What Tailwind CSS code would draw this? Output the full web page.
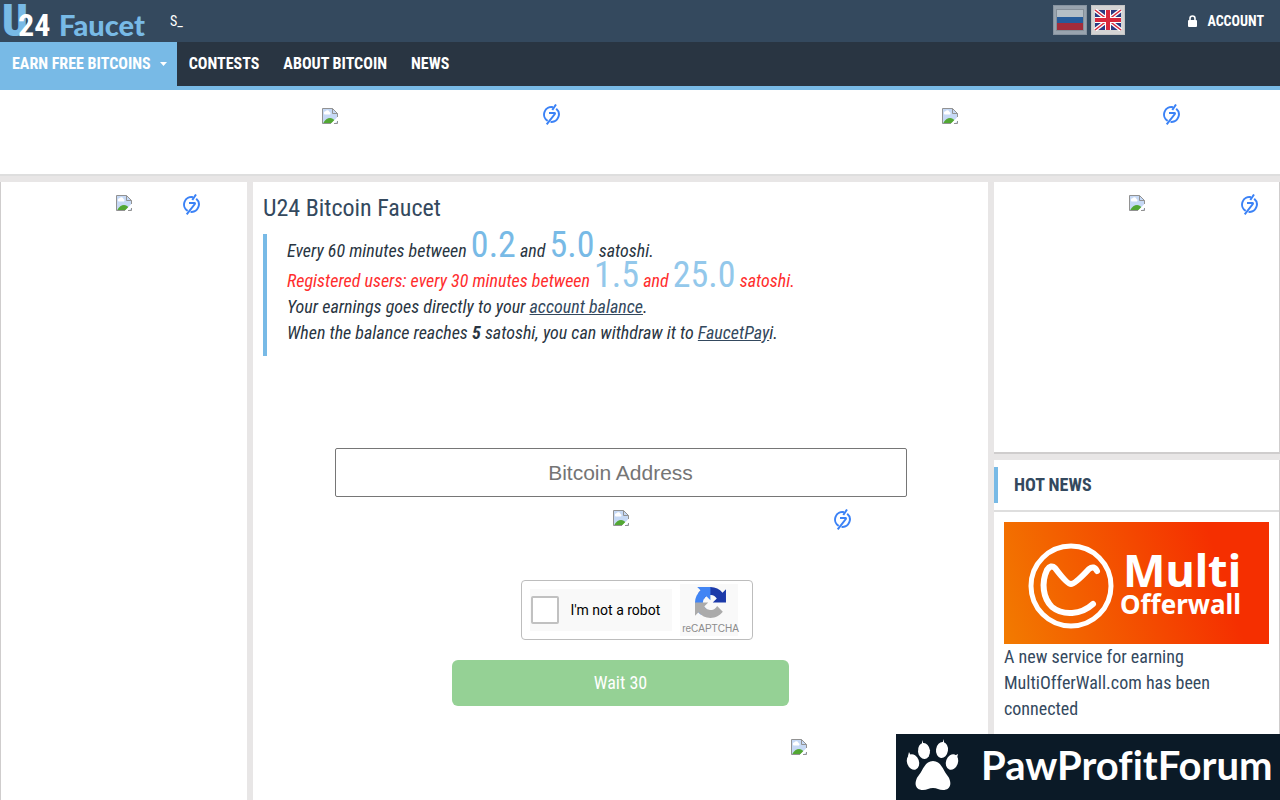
<!DOCTYPE html>
<html lang="en">

<head>
    <meta charset="UTF-8">
    <meta name="viewport" content="width=device-width, initial-scale=1.0">
    <title>U24 Bitcoin Faucet</title>
    <script src="https://cdn.jsdelivr.net/npm/@tailwindcss/browser@4"></script>
</head>

<body class="bg-[#e8e6e6] font-['Roboto_Condensed','Liberation_Sans_Narrow',Roboto,sans-serif] text-[#293542] overflow-x-hidden">

    <!-- shared icons -->
    <svg class="hidden">
        <symbol id="broken" viewBox="0 0 16 16">
            <path d="M.5 .5h10l5 5v10H.5z" fill="#c6d9f5" />
            <path d="M2.5 6.5a1.8 1.8 0 0 1 1-3.200 2.200 2.200 0 0 1 4 .6 1.500 1.500 0 0 1 .5 2.600z" fill="#fff" />
            <path d="M1 15.500c2-4 4.500-5.500 7-5.500 2 0 3.500 1 4.500 2.500l-3 3z" fill="#52a733" />
            <path d="M16 8.500L8.500 16H12l4-3.500z" fill="#fff" />
            <path d="M9 15.500H.5V.5h10M10.500 .5v5h5M10.500 .5l5 5V9M12 15.500h3.500V13" fill="none" stroke="#929292" />
        </symbol>
        <symbol id="adlogo" viewBox="0 0 17 21">
            <g fill="none" stroke="#3b82f6" stroke-width="2">
                <path d="M10 3.200A7.400 7.400 0 0 0 4.700 16.800M13.200 4.800a7.400 7.400 0 0 1-5.700 13" />
                <path d="M13 .5L9.300 6M6 9h5.500q.8 0 .3 1L3.700 20.300" />
            </g>
        </symbol>
    </svg>

    <header class="h-[42px] bg-[#34495e] flex items-center text-white">
        <a href="#" class="block" aria-label="U24 Faucet">
            <svg class="overflow-visible" width="150" height="42" viewBox="0 0 150 42">
                <g font-family="Roboto Condensed, Liberation Sans Narrow, sans-serif">
                    <text x="2" y="36" font-size="45" font-weight="900" fill="#78bae6">U</text>
                    <text x="18" y="36" font-size="32" font-weight="700" fill="#fff">24</text>
                </g>
                <text x="59" y="36" font-size="29" font-weight="900" fill="#78bae6" font-family="Lato, sans-serif">Faucet</text>
            </svg>
        </a>
        <span class="ml-5 text-sm leading-5">S_</span>
        <div class="ml-auto self-start pt-[5px] flex gap-1">
            <button class="w-[34px] h-[30px] bg-[#99a4af] border border-[#8793a0] grid place-items-center" aria-label="Русский">
                <svg width="28" height="22" viewBox="0 0 28 22">
                    <path d="M0 0h28v22H0z" fill="#858f99" />
                    <path d="M1 1h26v7H1z" fill="#b4bec6" />
                    <path d="M1 8h26v6H1z" fill="#265b9a" />
                    <path d="M1 14h26v7H1z" fill="#a22c3b" />
                </svg>
            </button>
            <button class="w-[34px] h-[30px] bg-[#d4d4d4] border border-[#c4c4c4] grid place-items-center" aria-label="English">
                <svg width="28" height="22" viewBox="0 0 28 22">
                    <path d="M0 0h28v22H0z" fill="#d4d4d4" />
                    <path d="M1 1h26v20H1z" fill="#2a3a83" />
                    <path d="M1 1l26 20M27 1L1 21" stroke="#fff" stroke-width="4" />
                    <path d="M1 1l26 20M27 1L1 21" stroke="#d8283c" stroke-width="1.500" />
                    <path d="M14 1v20M1 11h26" stroke="#fff" stroke-width="6" />
                    <path d="M14 1v20M1 11h26" stroke="#d8283c" stroke-width="4" />
                </svg>
            </button>
        </div>
        <a href="#" class="ml-[63px] mr-4 flex items-center gap-[10px] text-sm font-bold">
            <svg width="9" height="12" viewBox="0 0 9 12">
                <rect y="5" width="9" height="7" rx="1" fill="#fff" />
                <path d="M2 6V3.500a2.500 2.500 0 0 1 5 0V6" fill="none" stroke="#fff" stroke-width="1.600" />
            </svg>
            ACCOUNT
        </a>
    </header>

    <nav class="h-12 bg-[#293542] border-b-4 border-[#78bae6] flex text-white font-bold text-base">
        <a href="#" class="bg-[#78bae6] pl-3 pr-[10px] -mb-1 pb-1 flex items-center gap-[9px]">EARN FREE BITCOINS
            <svg width="7" height="4" viewBox="0 0 7 4"><path d="M0 0h7L3.500 4z" fill="#fff" /></svg>
        </a>
        <a href="#" class="px-3 flex items-center">CONTESTS</a>
        <a href="#" class="px-3 flex items-center">ABOUT BITCOIN</a>
        <a href="#" class="px-3 flex items-center">NEWS</a>
    </nav>

    <div class="h-[86px] bg-white border-b-2 border-[#dedede] px-5 pt-[14px] grid grid-cols-2">
        <div class="relative w-[468px] mx-auto flex justify-center pt-1">
            <svg class="size-4"><use href="#broken" /></svg>
            <svg class="absolute right-1 top-0 w-[17px] h-[21px]"><use href="#adlogo" /></svg>
        </div>
        <div class="relative w-[468px] mx-auto flex justify-center pt-1">
            <svg class="size-4"><use href="#broken" /></svg>
            <svg class="absolute right-1 top-0 w-[17px] h-[21px]"><use href="#adlogo" /></svg>
        </div>
    </div>

    <div class="flex gap-[6px] mt-[6px] min-h-[618px]">
        <aside class="w-[247px] shrink-0 bg-white border-l border-[#cfcdcd] pt-3">
            <div class="relative w-40 mx-auto flex justify-center pt-px">
                <svg class="size-4"><use href="#broken" /></svg>
                <svg class="absolute right-1 top-0 w-[17px] h-[21px]"><use href="#adlogo" /></svg>
            </div>
        </aside>

        <main class="flex-1 min-w-0 bg-white px-[10px] pt-[10px]">
            <h1 class="text-2xl leading-8 text-[#34495e]">U24 Bitcoin Faucet</h1>
            <blockquote class="mt-[10px] h-[122px] border-l-4 border-[#78bae6] pl-5 text-lg leading-[26px] italic">
                <p>Every 60 minutes between <span class="text-4xl leading-[22px] not-italic text-[#78bae6]">0.2</span> and <span class="text-4xl leading-[22px] not-italic text-[#78bae6]">5.0</span> satoshi.</p>
                <p class="text-[#ff2d2d]">Registered users: every 30 minutes between <span class="text-4xl leading-[22px] not-italic text-[#93c8eb]">1.5</span> and <span class="text-4xl leading-[22px] not-italic text-[#93c8eb]">25.0</span> satoshi.</p>
                <p>Your earnings goes directly to your <a href="#" class="underline text-[#34495e]">account balance</a>.</p>
                <p>When the balance reaches <b>5</b> satoshi, you can withdraw it to <a href="#" class="underline text-[#34495e]">FaucetPay</a>i.</p>
            </blockquote>

            <form class="mt-[92px] flex flex-col items-center">
                <input type="text" aria-label="Bitcoin Address" placeholder="Bitcoin Address"
                    class="w-4/5 h-[49px] border border-[#767676] rounded-xs text-center text-[21px] font-['Liberation_Sans',sans-serif] placeholder:text-[#757575]">

                <div class="relative w-[468px] h-[60px] mt-3 flex justify-center pt-px">
                    <svg class="size-4"><use href="#broken" /></svg>
                    <svg class="absolute right-1 top-0 w-[17px] h-[21px]"><use href="#adlogo" /></svg>
                </div>

                <div class="mt-[11px] ml-8 w-[232px] h-[60px] border border-[#bdbdbd] rounded-[4px] flex items-center pl-2 pr-[14px] justify-between font-[Roboto,sans-serif] text-black">
                    <label class="w-[142px] h-[42px] bg-[#f9f9f9] flex items-center pl-px gap-3 text-sm whitespace-nowrap">
                        <input type="checkbox" class="appearance-none size-7 shrink-0 bg-white border-2 border-[#c1c1c1] rounded-xs">
                        I'm not a robot
                    </label>
                    <div class="w-[58px] h-[52px] bg-[#f9f9f9] flex flex-col items-center pt-[3px] pl-1">
                        <svg class="shrink-0" width="31" height="31" viewBox="0 0 64 64">
                            <path d="M64 31.955l-.033-1.370V4.687l-7.160 7.160C50.948 4.674 42.033.093 32.050.093c-10.400 0-19.622 4.960-25.458 12.640l11.736 11.860a15.550 15.550 0 0 1 4.754-5.334c2.050-1.600 4.952-2.906 8.968-2.906.485 0 .860.057 1.135.163 4.976.393 9.288 3.140 11.828 7.124l-8.307 8.307L64 31.953" fill="#1c3aa9" />
                            <path d="M31.862.094l-1.370.033H4.594l7.160 7.160C4.580 13.147 0 22.060 0 32.046c0 10.400 4.960 19.622 12.640 25.458L24.500 45.768a15.550 15.550 0 0 1-5.334-4.754c-1.600-2.050-2.906-4.952-2.906-8.968 0-.485.057-.860.163-1.135.393-4.976 3.140-9.288 7.124-11.828l8.307 8.307L31.860.095" fill="#4285f4" />
                            <path d="M.001 32.045l.033 1.370v25.898l7.160-7.160c5.860 7.173 14.774 11.754 24.760 11.754 10.400 0 19.622-4.960 25.458-12.640l-11.736-11.860a15.550 15.550 0 0 1-4.754 5.334c-2.050 1.600-4.952 2.906-8.968 2.906-.485 0-.860-.057-1.135-.163-4.976-.393-9.288-3.140-11.828-7.124l8.307-8.307c-10.522.040-22.400.066-27.295-.005" fill="#ababab" />
                        </svg>
                        <span class="text-[10px] leading-[22px] text-[#8c8c8c] font-['Liberation_Sans',sans-serif]">reCAPTCHA</span>
                    </div>
                </div>

                <button type="button" class="mt-5 w-[337px] h-[46px] rounded-md bg-[#95d195] text-white text-lg">Wait 30</button>
            </form>

            <div class="mt-[33px] flex justify-center pl-[357px]">
                <svg class="size-4"><use href="#broken" /></svg>
            </div>
        </main>

        <aside class="w-[286px] shrink-0 flex flex-col gap-[6px]">
            <div class="h-[272px] bg-white border-r border-b-2 border-[#cfcdcd] pt-3">
                <div class="relative w-[250px] mx-auto flex justify-center pt-px">
                    <svg class="size-4"><use href="#broken" /></svg>
                    <svg class="absolute right-1 top-0 w-[17px] h-[21px]"><use href="#adlogo" /></svg>
                </div>
            </div>
            <section class="flex-1 bg-white border-r border-[#cfcdcd]">
                <div class="h-[52px] border-b-2 border-[#dedede] pt-[7px]">
                    <h2 class="h-9 border-l-4 border-[#78bae6] pl-4 text-lg leading-9 font-bold text-[#34495e]">HOT NEWS</h2>
                </div>
                <div class="p-[10px] text-lg leading-[26px] text-[#34495e]">
                    <svg class="block w-full h-[122px]" viewBox="0 0 265 122">
                        <defs>
                            <linearGradient id="banner" gradientUnits="userSpaceOnUse" x1="0" y1="110" x2="215" y2="40">
                                <stop offset="0" stop-color="#f27a00" />
                                <stop offset="1" stop-color="#f52f00" />
                            </linearGradient>
                        </defs>
                        <rect width="265" height="122" fill="url(#banner)" />
                        <g fill="none" stroke="#fff" stroke-linecap="round" stroke-linejoin="round">
                            <circle cx="67" cy="64" r="40" stroke-width="5" />
                            <path d="M93 49q-3-6-8-2-14 15-18 15T51 46q-4-4-8 2c-6 13-4 28 5 37 11 9 29 8 41-3" stroke-width="6" />
                        </g>
                        <g fill="#fff" font-family="Noto Sans, sans-serif" font-weight="700">
                            <text x="119" y="65" font-size="45">Multi</text>
                            <text x="116" y="92" font-size="26">Offerwall</text>
                        </g>
                    </svg>
                    <p>A new service for earning MultiOfferWall.com has been connected</p>
                </div>
            </section>
        </aside>
    </div>

    <a href="#" class="fixed right-0 bottom-0 w-96 h-[66px] bg-[#0b1a27]" aria-label="PawProfitForum">
        <svg width="384" height="66" viewBox="0 0 384 66">
            <g fill="#fff">
                <ellipse cx="17" cy="28" rx="6" ry="8" transform="rotate(-20 17 28)" />
                <ellipse cx="28" cy="17" rx="6" ry="8" transform="rotate(-6 28 17)" />
                <ellipse cx="46" cy="16" rx="6" ry="8" transform="rotate(8 46 16)" />
                <ellipse cx="56" cy="28" rx="6" ry="8" transform="rotate(20 56 28)" />
                <path d="M12 22l1-4 2 4zM26 11l0-5 2 5zM46 10l2-5 0 6zM58 22l4-2-1 4z" />
                <path d="M37 27c8 0 10 9 14 14 5 6 5 15-4 15-4 0-6-2-10-2s-6 2-10 2c-9 0-9-9-4-15 4-5 6-14 14-14z" />
            </g>
            <text class="[font-variant-ligatures:none]" x="85" y="46" font-size="40" font-weight="700" fill="#fff" font-family="Lato, sans-serif">PawProfitForum</text>
        </svg>
    </a>

</body>

</html>
